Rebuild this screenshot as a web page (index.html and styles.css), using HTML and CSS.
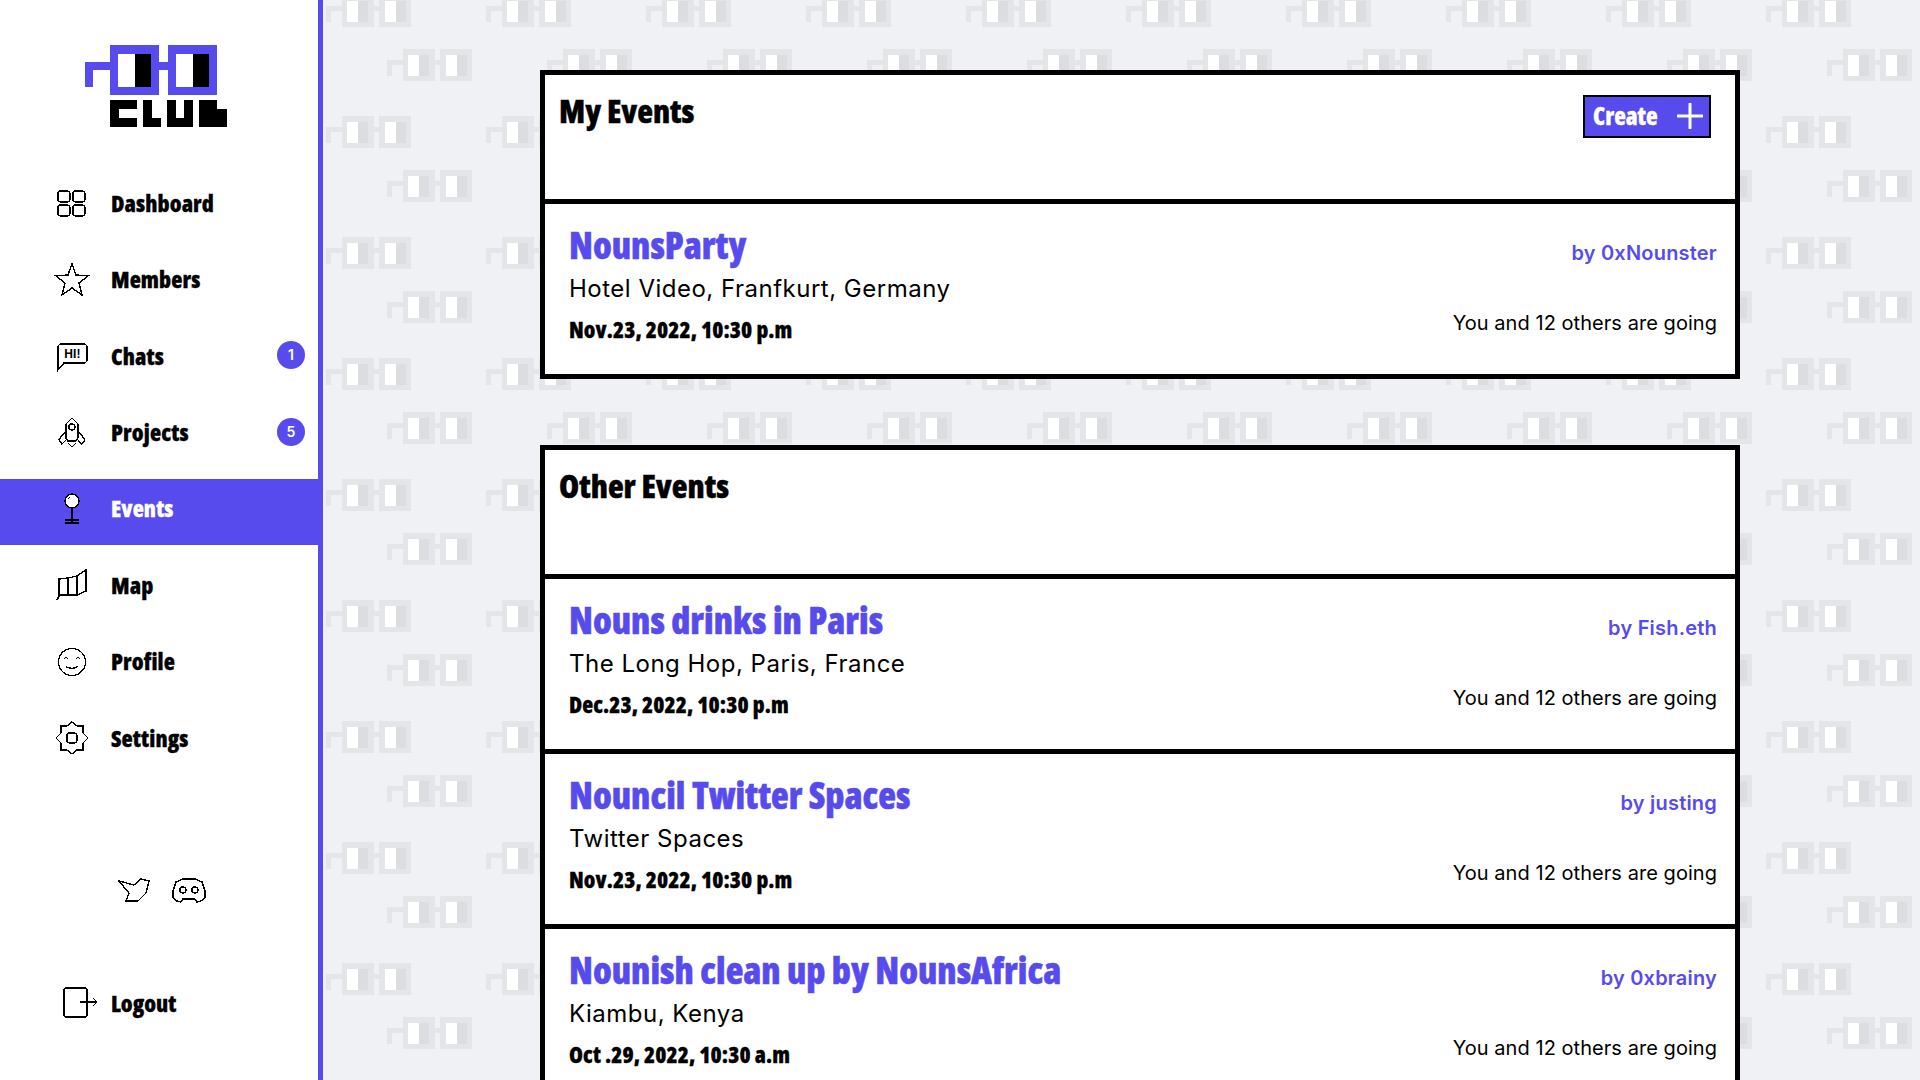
FILE: index.html
```html
<!DOCTYPE html>
<html lang="en">
<head>
    <meta charset="UTF-8">
    <title>Events</title>
    <link rel="stylesheet" href="styles.css">
</head>
<body>

<div class="sidebar">
    <div class="logo">
        <svg width="142" height="82" viewBox="0 0 142 82" shape-rendering="crispEdges">
            <path fill="#584bed" d="M25 0h49v50H25zM83 0h49v50H83zM0 17h25v8H8v17H0zM74 17h9v8h-9z"/>
            <rect x="33" y="9" width="17" height="33" fill="#fff"/>
            <rect x="50" y="9" width="16" height="33" fill="#000"/>
            <rect x="91" y="9" width="17" height="33" fill="#fff"/>
            <rect x="108" y="9" width="16" height="33" fill="#000"/>
            <path fill="#000" d="M25 55h27v9H34v9h18v9H25zM58 55h9v18h9v9H58zM82 55h9v18h8V55h9v27H82zM114 55h18v9h10v18h-28z"/>
        </svg>
    </div>
    <ul class="nav">
        <li><svg class="ico" viewBox="0 0 32 32"><rect x="2" y="4" width="12" height="11" rx="3"/><rect x="17" y="4" width="12" height="11" rx="3"/><rect x="2" y="18" width="12" height="11" rx="3"/><rect x="17" y="18" width="12" height="11" rx="3"/></svg><span>Dashboard</span></li>
        <li><svg class="ico" viewBox="0 0 32 32"><path d="M16 0l4 11 12 1-9 7 3 12-10-7-10 7 3-12-9-7 12-1z"/></svg><span>Members</span></li>
        <li><svg class="ico" viewBox="0 0 32 32"><path d="M2 30V6l2-2h25l2 2v15l-2 2H8z"/><text x="16.5" y="18" class="hi">HI!</text></svg><span>Chats</span><i class="badge">1</i></li>
        <li><svg class="ico" viewBox="0 0 32 32"><path d="M16 1l6 6v14l-2 3H12l-2-3V7zM10 14l-5 6-2 3 3 4 4-4M22 14l5 6 2 3-3 4-4-4M12 26l4 4 4-4"/><circle cx="16" cy="10" r="3"/></svg><span>Projects</span><i class="badge">5</i></li>
        <li class="current"><svg class="ico" viewBox="0 0 32 32"><circle cx="16" cy="8" r="7" fill="#fff"/><path d="M12 6l2-2M16 15v15M9 27h14M9 30h14"/></svg><span>Events</span></li>
        <li><svg class="ico" viewBox="0 0 32 32"><path d="M1 31l2-3V10l9-1 9-2 9-6v21l-9 4H3zM12 9v17M21 7v19"/></svg><span>Map</span></li>
        <li><svg class="ico" viewBox="0 0 32 32"><circle cx="16" cy="16" r="13.5"/><path d="M8 13l2-2 2 2M20 13l2-2 2 2M10 20c2 3 10 3 12 0"/></svg><span>Profile</span></li>
        <li><svg class="ico" viewBox="0 0 32 32"><path d="M16 0l5 4h6v7l5 5-5 5v7h-6l-5 4-5-4H5v-7l-5-5 5-5V4h6z"/><rect x="11" y="11" width="10" height="10" rx="3"/></svg><span>Settings</span></li>
    </ul>
    <div class="social">
        <svg class="ico tw" viewBox="0 0 32 26"><path d="M0 4l15 4 7-6 8 2-3 12-8 8H7l3-8z"/></svg>
        <svg class="ico disc" viewBox="0 0 34 26"><path d="M1 14l3-9 7-3h12l7 3 3 9v7l-4 3-4 1-2-3H11l-2 3-4-1-4-3z"/><circle cx="11" cy="13" r="3"/><circle cx="23" cy="13" r="3"/></svg>
    </div>
    <div class="logout">
        <svg class="ico out" viewBox="0 0 36 32"><rect x="1" y="1" width="23" height="29" rx="2"/><path d="M17 15h17M30 11l4 4-4 4"/></svg>
        <span>Logout</span>
    </div>
</div>

<div class="main">
    <svg class="pattern" width="100%" height="100%">
        <defs>
            <g id="glasses" shape-rendering="crispEdges">
                <path fill="#e4e5e9" d="M16 0h32v32H16zM53 0h32v32H53zM0 11h16v5H5v11H0zM48 11h5v5h-5z"/>
                <rect x="21" y="6" width="11" height="21" fill="#fff"/>
                <rect x="32" y="6" width="10" height="21" fill="#dcdde1"/>
                <rect x="59" y="6" width="11" height="21" fill="#fff"/>
                <rect x="70" y="6" width="10" height="21" fill="#dcdde1"/>
            </g>
            <pattern id="tile" x="3" y="-5" width="160" height="121" patternUnits="userSpaceOnUse">
                <use href="#glasses" x="0" y="0"/>
                <use href="#glasses" x="61" y="54"/>
            </pattern>
        </defs>
        <rect width="100%" height="100%" fill="url(#tile)"/>
    </svg>

    <div class="panel">
        <div class="panel-head">
            <h2>My Events</h2>
            <a href="#" class="create">Create
                <svg width="26" height="26" viewBox="0 0 26 26"><path d="M13 1v24M1 13h24" stroke="#fff" stroke-width="3" stroke-linecap="round"/></svg>
            </a>
        </div>
        <div class="event">
            <div>
                <h3>NounsParty</h3>
                <p class="place">Hotel Video, Franfkurt, Germany</p>
                <p class="date">Nov.23, 2022, 10:30 p.m</p>
            </div>
            <div class="event-right">
                <p class="by">by 0xNounster</p>
                <p class="going">You and 12 others are going</p>
            </div>
        </div>
    </div>

    <div class="panel">
        <div class="panel-head">
            <h2>Other Events</h2>
        </div>
        <div class="event">
            <div>
                <h3>Nouns drinks in Paris</h3>
                <p class="place">The Long Hop, Paris, France</p>
                <p class="date">Dec.23, 2022, 10:30 p.m</p>
            </div>
            <div class="event-right">
                <p class="by">by Fish.eth</p>
                <p class="going">You and 12 others are going</p>
            </div>
        </div>
        <div class="event">
            <div>
                <h3>Nouncil Twitter Spaces</h3>
                <p class="place">Twitter Spaces</p>
                <p class="date">Nov.23, 2022, 10:30 p.m</p>
            </div>
            <div class="event-right">
                <p class="by">by justing</p>
                <p class="going">You and 12 others are going</p>
            </div>
        </div>
        <div class="event">
            <div>
                <h3>Nounish clean up by NounsAfrica</h3>
                <p class="place">Kiambu, Kenya</p>
                <p class="date">Oct .29, 2022, 10:30 a.m</p>
            </div>
            <div class="event-right">
                <p class="by">by 0xbrainy</p>
                <p class="going">You and 12 others are going</p>
            </div>
        </div>
    </div>
</div>

</body>
</html>
```

FILE: styles.css
```css
* {
    padding: 0;
    margin: 0;
    list-style: none;
    box-sizing: border-box;
}
html, body {
    height: 100%;
    overflow: hidden;
}
body {
    display: flex;
    font-family: "Inter", "Liberation Sans", sans-serif;
    color: #000;
    background: #f0f1f5;
}
.sidebar {
    width: 323px;
    height: 1080px;
    flex: none;
    background: #fff;
    border-right: 5px solid #584bed;
    padding-top: 45px;
}
.logo {
    padding-left: 85px;
    height: 82px;
}
.logo svg {
    display: block;
}
.nav {
    margin-top: 46.4px;
}
.nav li {
    position: relative;
    height: 66px;
    margin-bottom: 10.4px;
    padding: 0 0 6px 56px;
    display: flex;
    align-items: center;
    font: 800 23px/1 "Open Sans", "Liberation Sans", sans-serif;
    font-stretch: 75%;
    letter-spacing: 0.1px;
    -webkit-text-stroke: 0.3px;
}
.nav .current {
    background: #584bed;
    color: #fff;
}
.nav span {
    margin-left: 23px;
}
.ico {
    width: 32px;
    height: 32px;
    flex: none;
    fill: none;
    stroke: #000;
    stroke-width: 1.4;
    overflow: visible;
    shape-rendering: crispEdges;
}
.hi {
    font: 700 12px "Liberation Sans", sans-serif;
    fill: #000;
    stroke: none;
    text-anchor: middle;
}
.badge {
    position: absolute;
    left: 277px;
    top: 15px;
    width: 28px;
    height: 28px;
    border-radius: 50%;
    background: #584bed;
    color: #fff;
    font: 600 14px/28px "Inter", sans-serif;
    font-style: normal;
    text-align: center;
    -webkit-text-stroke: 0;
}
.social {
    display: flex;
    gap: 21px;
    margin-top: 103px;
    padding-left: 119px;
}
.social .ico {
    height: 26px;
}
.social .disc {
    width: 34px;
}
.logout {
    display: flex;
    align-items: center;
    gap: 12px;
    margin-top: 84px;
    padding-left: 63px;
    font: 800 23px/1 "Open Sans", "Liberation Sans", sans-serif;
    font-stretch: 75%;
    -webkit-text-stroke: 0.3px;
}
.logout .out {
    width: 36px;
}
.main {
    position: relative;
    flex: 1;
    height: 1080px;
    padding: 70px 180px 0 217px;
    overflow: hidden;
}
.pattern {
    position: absolute;
    left: 0;
    top: 0;
}
.panel {
    position: relative;
    width: 1200px;
    border: 5px solid #000;
    background: #fff;
    margin-bottom: 66px;
}
.panel-head {
    height: 124px;
    padding: 12px 24px 0 14px;
    display: flex;
    justify-content: space-between;
    align-items: flex-start;
}
h2 {
    font: 800 32.5px/48px "Open Sans", "Liberation Sans", sans-serif;
    font-stretch: 75%;
    -webkit-text-stroke: 0.4px;
}
.create {
    display: flex;
    align-items: center;
    justify-content: space-between;
    width: 128px;
    height: 43px;
    margin-top: 8px;
    padding: 0 6px 2px 8px;
    background: #584bed;
    border: 2px solid #000;
    color: #fff;
    text-decoration: none;
    font: 800 24px/1 "Open Sans", "Liberation Sans", sans-serif;
    font-stretch: 75%;
    -webkit-text-stroke: 0.3px;
}
.event {
    height: 175px;
    border-top: 5px solid #000;
    padding: 18px 18px 0 24px;
    display: flex;
    justify-content: space-between;
}
h3 {
    font: 800 36.5px/46px "Open Sans", "Liberation Sans", sans-serif;
    font-stretch: 75%;
    -webkit-text-stroke: 0.5px;
    color: #584bed;
}
.place {
    font-size: 24px;
    line-height: 29px;
    letter-spacing: 0.5px;
    margin-top: 6px;
}
.date {
    font: 800 22.5px/30px "Open Sans", "Liberation Sans", sans-serif;
    font-stretch: 75%;
    letter-spacing: 0.1px;
    -webkit-text-stroke: 0.3px;
    margin-top: 12px;
}
.event-right {
    text-align: right;
    font-size: 20px;
}
.by {
    color: #584bed;
    font-weight: 600;
    letter-spacing: 0.2px;
    margin-top: 19px;
    line-height: 24px;
}
.going {
    margin-top: 46px;
    line-height: 24px;
    letter-spacing: 0.05px;
}
```
